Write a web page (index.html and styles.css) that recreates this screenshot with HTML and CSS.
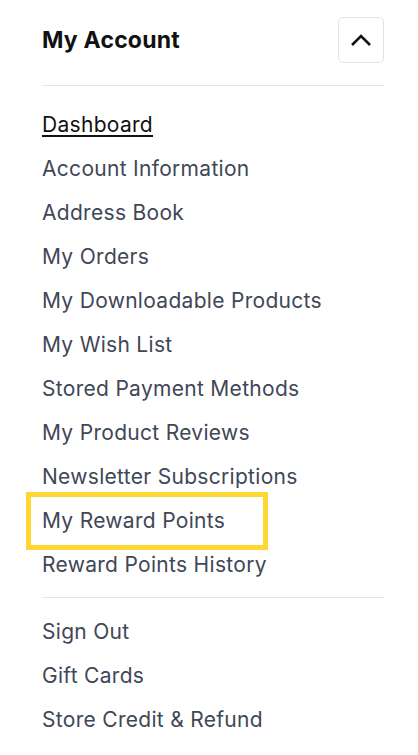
FILE: index.html
```html
<html>
<head>
<link rel="stylesheet" href="styles.css">
</head>
<body>
<div class="account">
  <div class="account-head">
    <h2>My Account</h2>
    <button class="toggle">
      <svg width="22" height="14" viewBox="0 0 22 14"><path d="M2 12 L11 3 L20 12" fill="none" stroke="#111" stroke-width="2.6"/></svg>
    </button>
  </div>
  <ul class="links">
    <li><a class="current" href="#">Dashboard</a></li>
    <li><a href="#">Account Information</a></li>
    <li><a href="#">Address Book</a></li>
    <li><a href="#">My Orders</a></li>
    <li><a href="#">My Downloadable Products</a></li>
    <li><a href="#">My Wish List</a></li>
    <li><a href="#">Stored Payment Methods</a></li>
    <li><a href="#">My Product Reviews</a></li>
    <li><a href="#">Newsletter Subscriptions</a></li>
    <li><a class="marked" href="#">My Reward Points</a></li>
    <li><a href="#">Reward Points History</a></li>
  </ul>
  <ul class="links lower">
    <li><a href="#">Sign Out</a></li>
    <li><a href="#">Gift Cards</a></li>
    <li><a href="#">Store Credit &amp; Refund</a></li>
  </ul>
</div>
</body>
</html>
```

FILE: styles.css
```css
body {
  margin: 0;
  background: #fff;
  font-family: Inter, "Noto Sans", sans-serif;
}

.account {
  padding: 17px 34px 0 42px;
}

.account-head {
  display: flex;
  justify-content: space-between;
  align-items: center;
  padding-bottom: 22px;
  border-bottom: 1px solid #e5e5e5;
}

.account-head h2 {
  margin: 0;
  font-size: 23px;
  font-weight: 700;
  color: #111;
  letter-spacing: 0.2px;
}

.toggle {
  width: 46px;
  height: 46px;
  border: 1px solid #e3e3e3;
  border-radius: 5px;
  background: #fff;
  display: flex;
  align-items: center;
  justify-content: center;
  padding: 0;
}

.links {
  list-style: none;
  margin: 0;
  padding: 17px 0 10px 0;
  border-bottom: 1px solid #e5e5e5;
}

.links.lower {
  border-bottom: none;
  padding-top: 12px;
}

.links li {
  height: 44px;
  display: flex;
  align-items: center;
}

.links a {
  font-size: 21px;
  color: #404756;
  text-decoration: none;
  letter-spacing: 0.3px;
  line-height: 24px;
}

.links a.current {
  color: #111;
  text-decoration: underline;
  text-decoration-thickness: 2px;
  text-underline-offset: 3px;
}

.links a.marked {
  display: inline-block;
  margin-left: -16px;
  padding: 12px 38px 12px 11px;
  border: 5px solid #fdd835;
}
```
